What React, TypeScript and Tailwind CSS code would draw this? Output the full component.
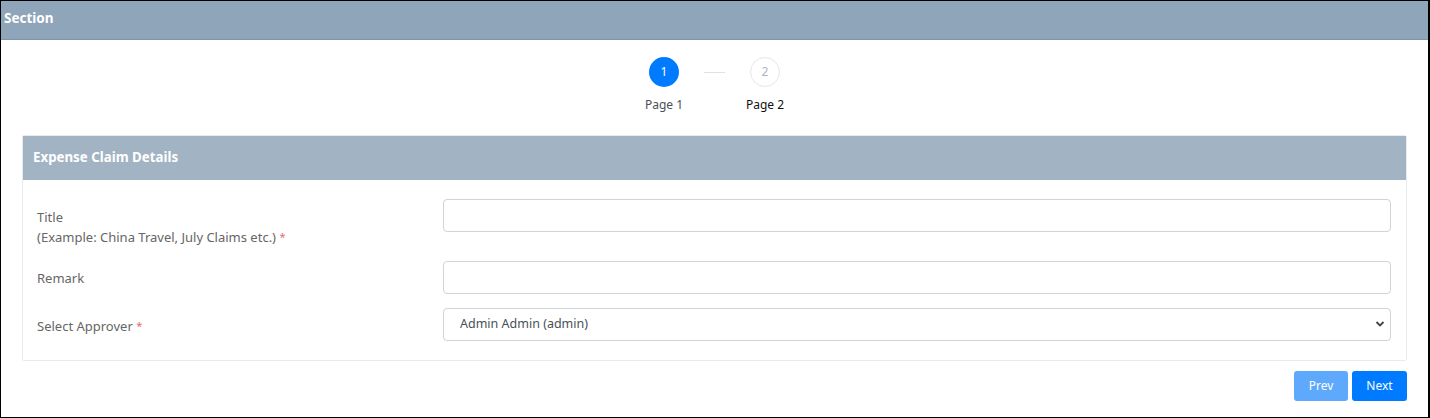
import { useState } from 'react';

const font = { fontFamily: '"Noto Sans", "Open Sans", sans-serif' };

function Stepper() {
  return (
    <div className="flex justify-center pt-[17px]">
      <div className="flex items-start">
        <div className="flex flex-col items-center w-[60px]">
          <div className="w-[30px] h-[30px] rounded-full bg-[#007bff] text-white flex items-center justify-center text-[12px]">1</div>
          <div className="mt-[12px] text-[12px] text-[#495057] leading-none">Page 1</div>
        </div>
        <div className="w-[21px] h-px bg-[#dee2e6] mt-[15px] mx-[10px]" />
        <div className="flex flex-col items-center w-[60px]">
          <div className="w-[30px] h-[30px] rounded-full bg-white border border-[#e5e7eb] text-[#adb5bd] flex items-center justify-center text-[12px]">2</div>
          <div className="mt-[12px] text-[12px] text-[#111] leading-none">Page 2</div>
        </div>
      </div>
    </div>
  );
}

function Row({ label, children, className = '', labelClass = '' }: { label: React.ReactNode; children: React.ReactNode; className?: string; labelClass?: string }) {
  return (
    <div className={`flex ${className}`}>
      <div className={`w-[420px] pl-[14px] text-[13px] text-[#666] leading-[19px] ${labelClass}`}>{label}</div>
      <div className="flex-1">{children}</div>
    </div>
  );
}

const Req = () => <span className="text-[#e26d6d] text-[11px] align-[1px]">*</span>;

export default function App() {
  const [title, setTitle] = useState('');
  const [remark, setRemark] = useState('');

  return (
    <div style={font} className="w-[1430px] h-[418px] bg-white border-l border-t border-b border-r-2 border-black overflow-hidden">
      <div className="h-[39px] bg-[#8fa5b9] border-b border-[#7f94a8] flex items-center px-[3px] pb-[3px]">
        <span className="text-white font-bold text-[13.5px]">Section</span>
      </div>

      <Stepper />

      <div className="mx-[21px] mt-[24px] border border-[#e8ebee] rounded-[2px]">
        <div className="h-[44px] bg-[#a2b3c3] flex items-center px-[10px]">
          <span className="text-white font-bold text-[13.3px]">Expense Claim Details</span>
        </div>
        <div className="pt-[19px] pb-[19px] pr-[15px]">
          <Row className="items-start h-[46px]" label={<><div className="mt-[9px]">Title</div><div>(Example: China Travel, July Claims etc.) <Req /></div></>}>
            <input value={title} onChange={e => setTitle(e.target.value)} className="w-full h-[33px] border border-[#ced4da] rounded-[4px] px-3 text-[13px] outline-none" />
          </Row>
          <Row className="mt-[16px] items-center" labelClass="pt-[2px]" label="Remark">
            <input value={remark} onChange={e => setRemark(e.target.value)} className="w-full h-[33px] border border-[#ced4da] rounded-[4px] px-3 text-[13px] outline-none" />
          </Row>
          <Row className="mt-[14px] items-center" labelClass="pt-[2px]" label={<>Select Approver <Req /></>}>
            <div className="relative">
              <select defaultValue="admin" style={font} className="w-full h-[33px] appearance-none border border-[#ced4da] rounded-[4px] pl-[16px] text-[12.5px] text-[#495057] bg-white outline-none">
                <option value="admin">Admin Admin (admin)</option>
              </select>
              <svg className="absolute right-[6px] top-[12px] pointer-events-none" width="10" height="8" viewBox="0 0 10 8">
                <path d="M1.5 2 L5 5.5 L8.5 2" fill="none" stroke="#444" strokeWidth="1.8" />
              </svg>
            </div>
          </Row>
        </div>
      </div>

      <div className="flex justify-end gap-[4px] mr-[21px] mt-[10px]">
        <button className="w-[54px] h-[30px] rounded-[3px] bg-[#5ea9fb] text-white text-[12px]">Prev</button>
        <button className="w-[55px] h-[30px] rounded-[3px] bg-[#007bff] text-white text-[12px]">Next</button>
      </div>
    </div>
  );
}
